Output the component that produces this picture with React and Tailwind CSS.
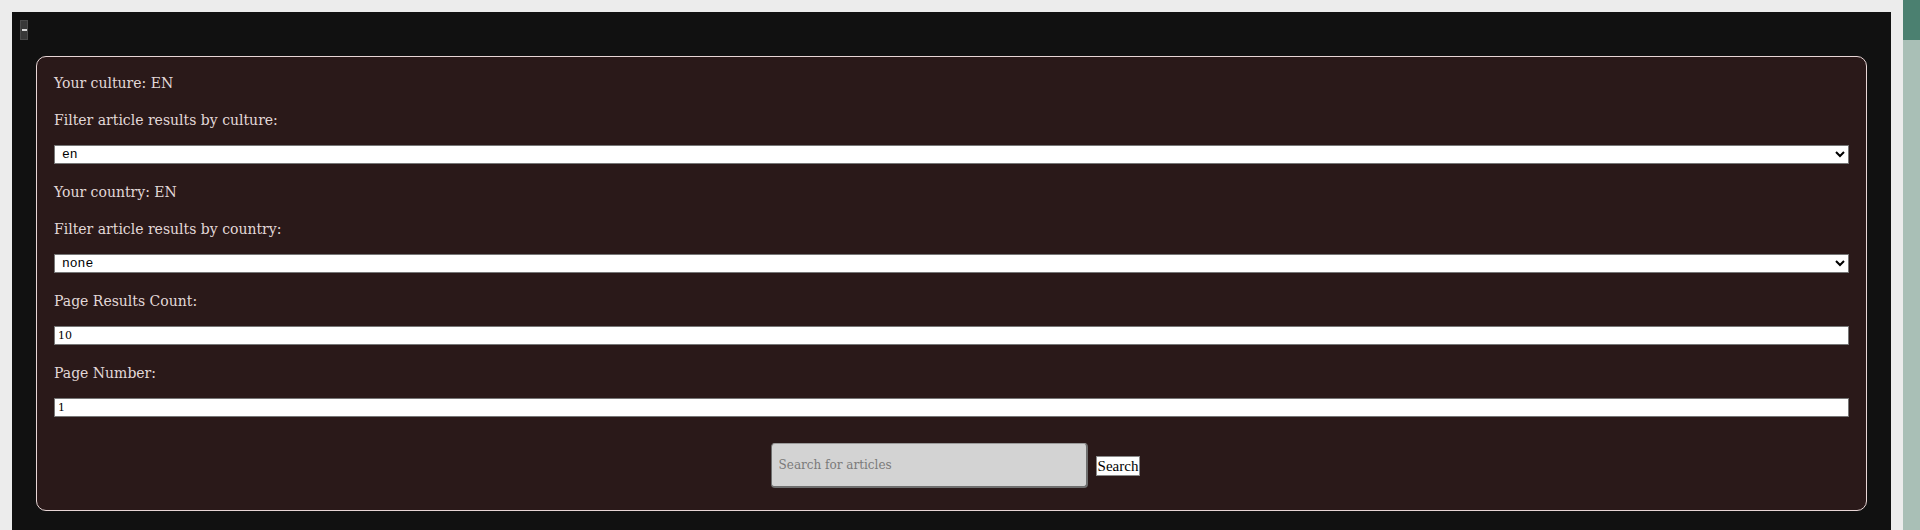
import React, { useState } from 'react';

const serif = "font-['DejaVu_Serif',Georgia,serif]";

function PageScrollbar() {
    return (
        <div className="flex h-[530px] w-[17px] shrink-0 flex-col bg-[#a9bfb6]">
            <div className="h-[40px] w-full bg-[#4b8070]" />
        </div>
    );
}

export default function App() {
    const [culture, setCulture] = useState('en');
    const [country, setCountry] = useState('none');
    const [count, setCount] = useState('10');
    const [page, setPage] = useState('1');
    const [query, setQuery] = useState('');

    const fieldClass = "h-[19px] w-full bg-white border border-[#767676] px-[3px] text-black";

    return (
        <div className="flex h-[530px] overflow-hidden bg-[#ececec]">
            <div className="flex-1 p-[12px] pb-0">
                <div className={`h-full bg-[#111111] px-[8px] pt-[8px] ${serif}`}>
                    <button className="flex h-[20px] w-[8px] items-center justify-center border border-[#4a4a4a] bg-[#383838]">
                        <span className="block h-[2px] w-[5px] bg-[#d8d8d8]" />
                    </button>

                    <div className="mx-[16px] mt-[16px] rounded-[10px] border border-[#e8d6d6] bg-[#2a1919] px-[17px] pt-[14px] pb-[22px]">
                        <div className="flex flex-col gap-[16px] text-[14px] leading-[21px] text-[#e2d8d8]">
                            <p className="pt-[2px] -mb-[2px]">Your culture: EN</p>
                            <p className="pt-[2px] -mb-[2px]">Filter article results by culture:</p>
                            <select
                                value={culture}
                                onChange={(e) => setCulture(e.target.value)}
                                className={`${fieldClass} text-[13px] font-['Liberation_Mono',monospace]`}
                            >
                                <option value="en">en</option>
                                <option value="fr">fr</option>
                                <option value="de">de</option>
                            </select>
                            <p className="pt-[2px] -mb-[2px]">Your country: EN</p>
                            <p className="pt-[2px] -mb-[2px]">Filter article results by country:</p>
                            <select
                                value={country}
                                onChange={(e) => setCountry(e.target.value)}
                                className={`${fieldClass} text-[13px] font-['Liberation_Mono',monospace]`}
                            >
                                <option value="none">none</option>
                                <option value="us">us</option>
                                <option value="gb">gb</option>
                            </select>
                            <p className="pt-[2px] -mb-[2px]">Page Results Count:</p>
                            <input
                                value={count}
                                onChange={(e) => setCount(e.target.value)}
                                className={`${fieldClass} px-[2px] text-[11px]`}
                            />
                            <p className="pt-[2px] -mb-[2px]">Page Number:</p>
                            <input
                                value={page}
                                onChange={(e) => setPage(e.target.value)}
                                className={`${fieldClass} px-[2px] text-[11px]`}
                            />
                        </div>

                        <div className="mt-[26px] flex items-center justify-center gap-[8px] pl-[8px]">
                            <input
                                value={query}
                                onChange={(e) => setQuery(e.target.value)}
                                placeholder="Search for articles"
                                className="h-[45px] w-[317px] rounded-[4px] border border-r-2 border-b-2 border-[#6e6e6e] border-t-[#9a9a9a] bg-[#d3d3d3] px-[7px] text-[12px] text-black placeholder:text-[#7a7a7a]"
                            />
                            <button className="h-[20px] border border-[#8a8a8a] bg-white px-[1px] font-['Liberation_Serif',serif] text-[15px] leading-[18px] text-black">
                                Search
                            </button>
                        </div>
                    </div>
                </div>
            </div>
            <PageScrollbar />
        </div>
    );
}
